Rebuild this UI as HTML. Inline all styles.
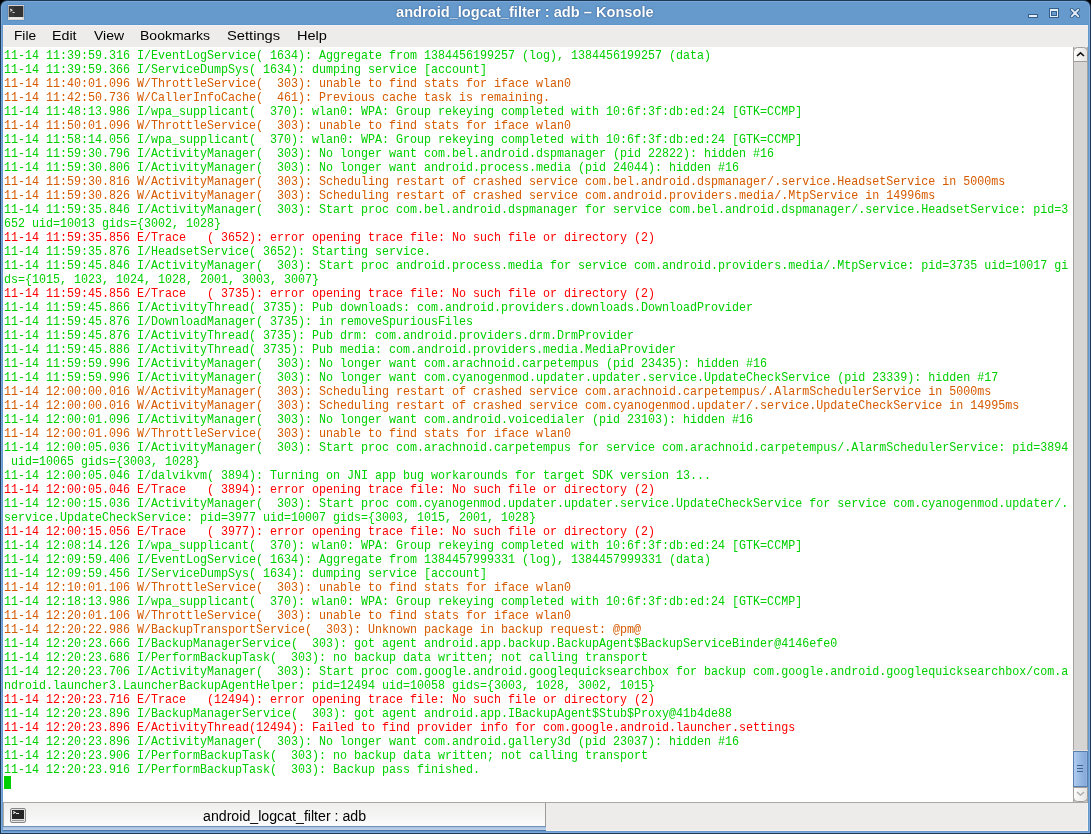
<!DOCTYPE html>
<html><head><meta charset="utf-8">
<style>
*{margin:0;padding:0;box-sizing:border-box}
html,body{width:1091px;height:834px;overflow:hidden;background:#000;position:relative}
.abs{position:absolute}
#f0{position:absolute;left:0;top:0;width:1091px;height:834px;background:#1f3a55;border-radius:7px 7px 0 0}
#f1{position:absolute;left:1px;top:1px;width:1089px;height:832px;background:#7aa8dc;border-radius:6px 6px 0 0}
#f2{position:absolute;left:2px;top:2px;width:1087px;height:830px;background:#6699cc;border-radius:5px 5px 0 0}
.lbl{position:absolute;line-height:20px;white-space:pre;transform-origin:0 0;font-family:"Liberation Sans",sans-serif;will-change:transform}
#ttl{left:396px;top:2px;font-size:14px;font-weight:bold;color:#fff;transform:scaleX(1.0447);will-change:transform;text-shadow:0 0 1px #2f5a8c,0 0 2px #3d6899}
#tline{position:absolute;left:2px;top:24px;width:1086px;height:1px;background:#5b96d0}
#menubar{position:absolute;left:3px;top:25px;width:1085px;height:22px;background:#edeceb;border-top:1px solid #f6f2ee}
.mi{top:26px;font-size:13px;color:#000}
#term{position:absolute;left:3px;top:47px;width:1070px;height:755px;background:#fff;overflow:hidden}
#txt{position:absolute;left:1px;top:0px;width:1070px;height:755px;will-change:transform}
#txt div{position:absolute;left:0;font-family:"Liberation Mono",monospace;font-size:13px;line-height:14px;white-space:pre;transform:scaleX(0.897436);transform-origin:0 0}
.g{color:#00d000}.o{color:#d65a00}.r{color:#ff0000}
#cursor{position:absolute;left:1px;top:729px;width:7px;height:13px;background:#00d000}
#sb{position:absolute;left:1073px;top:47px;width:15px;height:755px;background:#d6d5d3;border-left:1px solid #a5a29f;border-right:1px solid #a5a29f}
#bottomline{position:absolute;left:3px;top:802px;width:1085px;height:1px;background:#a9a8a6}
#tabbar{position:absolute;left:3px;top:803px;width:1084px;height:27px;background:#edeceb}
#tabhl{position:absolute;left:546px;top:830px;width:542px;height:1px;background:#f6f2ee}
#tabhl2{position:absolute;left:1087px;top:803px;width:1px;height:28px;background:#f6f2ee}
#tab{position:absolute;left:0px;top:0px;width:543px;height:23px;background:linear-gradient(#efeeed,#fbfbfb);border-left:1px solid #b3aca6;border-right:1px solid #9b9b9b}
#tabstrip{position:absolute;left:0;top:23px;width:543px;height:5px;background:linear-gradient(#7391b8 0px,#7391b8 1px,#a4bfe0 1px,#c1d3ea 4px,#4a73a6 4px)}
#tabt{left:203px;top:806px;font-size:14px;color:#000;transform:scaleX(1.0125)}
</style></head><body>
<div id="f0"></div><div id="f1"></div><div id="f2"></div>
<div id="tline"></div>
<div id="title">
<svg class="abs" style="left:7px;top:4px" width="18" height="17" viewBox="0 0 18 17">
<rect x="0" y="0" width="18" height="17" rx="2" fill="#4f80b8" opacity="0.45"/>
<rect x="1" y="1" width="16" height="15" fill="#a8a8a8"/>
<rect x="1" y="1" width="16" height="1" fill="#d4d4d4"/>
<rect x="2" y="2" width="14" height="11" fill="#323232"/>
<rect x="2" y="2" width="5" height="11" fill="#3a3a3a"/>
<rect x="1" y="13" width="16" height="3" fill="#d6d6d6"/>
<rect x="3" y="13.5" width="12" height="1.5" fill="#ececec"/>
<path d="M3.2 5 L5 6.2 L3.2 7.4" stroke="#e0e0e0" fill="none" stroke-width="1.1"/>
<rect x="5.5" y="8" width="2.2" height="1" fill="#d0d0d0"/>
</svg>
<div id="ttl" class="lbl">android_logcat_filter : adb – Konsole</div>
<svg class="abs" style="left:1028px;top:8px" width="52" height="10" viewBox="0 0 52 10">
<rect x="0.5" y="6.5" width="9" height="3" fill="#e6eef8" stroke="#335e8c"/>
<rect x="21.5" y="0.5" width="9" height="9" fill="#e6eef8" stroke="#335e8c"/>
<rect x="23.5" y="3.5" width="5" height="4" fill="#6699cc" stroke="#335e8c"/>
<path d="M43.7 1.7 L50.3 8.3 M50.3 1.7 L43.7 8.3" stroke="#335e8c" stroke-width="3.6" stroke-linecap="round"/>
<path d="M43.7 1.7 L50.3 8.3 M50.3 1.7 L43.7 8.3" stroke="#e6eef8" stroke-width="1.8" stroke-linecap="round"/>
</svg>
</div>
<div id="menubar"></div>
<div class="lbl mi" style="left:13.95px;transform:scaleX(1.0526)">File</div><div class="lbl mi" style="left:51.9px;transform:scaleX(1.0952)">Edit</div><div class="lbl mi" style="left:94px;transform:scaleX(1.0714)">View</div><div class="lbl mi" style="left:139.92px;transform:scaleX(1.0781)">Bookmarks</div><div class="lbl mi" style="left:226.87px;transform:scaleX(1.1304)">Settings</div><div class="lbl mi" style="left:296.88px;transform:scaleX(1.12)">Help</div>
<div id="term"><div id="txt"><div class="g" style="top:2px">11-14 11:39:59.316 I/EventLogService( 1634): Aggregate from 1384456199257 (log), 1384456199257 (data)</div><div class="g" style="top:16px">11-14 11:39:59.366 I/ServiceDumpSys( 1634): dumping service [account]</div><div class="o" style="top:30px">11-14 11:40:01.096 W/ThrottleService(  303): unable to find stats for iface wlan0</div><div class="o" style="top:44px">11-14 11:42:50.736 W/CallerInfoCache(  461): Previous cache task is remaining.</div><div class="g" style="top:58px">11-14 11:48:13.986 I/wpa_supplicant(  370): wlan0: WPA: Group rekeying completed with 10:6f:3f:db:ed:24 [GTK=CCMP]</div><div class="o" style="top:72px">11-14 11:50:01.096 W/ThrottleService(  303): unable to find stats for iface wlan0</div><div class="g" style="top:86px">11-14 11:58:14.056 I/wpa_supplicant(  370): wlan0: WPA: Group rekeying completed with 10:6f:3f:db:ed:24 [GTK=CCMP]</div><div class="g" style="top:100px">11-14 11:59:30.796 I/ActivityManager(  303): No longer want com.bel.android.dspmanager (pid 22822): hidden #16</div><div class="g" style="top:114px">11-14 11:59:30.806 I/ActivityManager(  303): No longer want android.process.media (pid 24044): hidden #16</div><div class="o" style="top:128px">11-14 11:59:30.816 W/ActivityManager(  303): Scheduling restart of crashed service com.bel.android.dspmanager/.service.HeadsetService in 5000ms</div><div class="o" style="top:142px">11-14 11:59:30.826 W/ActivityManager(  303): Scheduling restart of crashed service com.android.providers.media/.MtpService in 14996ms</div><div class="g" style="top:156px">11-14 11:59:35.846 I/ActivityManager(  303): Start proc com.bel.android.dspmanager for service com.bel.android.dspmanager/.service.HeadsetService: pid=3</div><div class="g" style="top:170px">652 uid=10013 gids={3002, 1028}</div><div class="r" style="top:184px">11-14 11:59:35.856 E/Trace   ( 3652): error opening trace file: No such file or directory (2)</div><div class="g" style="top:198px">11-14 11:59:35.876 I/HeadsetService( 3652): Starting service.</div><div class="g" style="top:212px">11-14 11:59:45.846 I/ActivityManager(  303): Start proc android.process.media for service com.android.providers.media/.MtpService: pid=3735 uid=10017 gi</div><div class="g" style="top:226px">ds={1015, 1023, 1024, 1028, 2001, 3003, 3007}</div><div class="r" style="top:240px">11-14 11:59:45.856 E/Trace   ( 3735): error opening trace file: No such file or directory (2)</div><div class="g" style="top:254px">11-14 11:59:45.866 I/ActivityThread( 3735): Pub downloads: com.android.providers.downloads.DownloadProvider</div><div class="g" style="top:268px">11-14 11:59:45.876 I/DownloadManager( 3735): in removeSpuriousFiles</div><div class="g" style="top:282px">11-14 11:59:45.876 I/ActivityThread( 3735): Pub drm: com.android.providers.drm.DrmProvider</div><div class="g" style="top:296px">11-14 11:59:45.886 I/ActivityThread( 3735): Pub media: com.android.providers.media.MediaProvider</div><div class="g" style="top:310px">11-14 11:59:59.996 I/ActivityManager(  303): No longer want com.arachnoid.carpetempus (pid 23435): hidden #16</div><div class="g" style="top:324px">11-14 11:59:59.996 I/ActivityManager(  303): No longer want com.cyanogenmod.updater.updater.service.UpdateCheckService (pid 23339): hidden #17</div><div class="o" style="top:338px">11-14 12:00:00.016 W/ActivityManager(  303): Scheduling restart of crashed service com.arachnoid.carpetempus/.AlarmSchedulerService in 5000ms</div><div class="o" style="top:352px">11-14 12:00:00.016 W/ActivityManager(  303): Scheduling restart of crashed service com.cyanogenmod.updater/.service.UpdateCheckService in 14995ms</div><div class="g" style="top:366px">11-14 12:00:01.096 I/ActivityManager(  303): No longer want com.android.voicedialer (pid 23103): hidden #16</div><div class="o" style="top:380px">11-14 12:00:01.096 W/ThrottleService(  303): unable to find stats for iface wlan0</div><div class="g" style="top:394px">11-14 12:00:05.036 I/ActivityManager(  303): Start proc com.arachnoid.carpetempus for service com.arachnoid.carpetempus/.AlarmSchedulerService: pid=3894</div><div class="g" style="top:408px"> uid=10065 gids={3003, 1028}</div><div class="g" style="top:422px">11-14 12:00:05.046 I/dalvikvm( 3894): Turning on JNI app bug workarounds for target SDK version 13...</div><div class="r" style="top:436px">11-14 12:00:05.046 E/Trace   ( 3894): error opening trace file: No such file or directory (2)</div><div class="g" style="top:450px">11-14 12:00:15.036 I/ActivityManager(  303): Start proc com.cyanogenmod.updater.updater.service.UpdateCheckService for service com.cyanogenmod.updater/.</div><div class="g" style="top:464px">service.UpdateCheckService: pid=3977 uid=10007 gids={3003, 1015, 2001, 1028}</div><div class="r" style="top:478px">11-14 12:00:15.056 E/Trace   ( 3977): error opening trace file: No such file or directory (2)</div><div class="g" style="top:492px">11-14 12:08:14.126 I/wpa_supplicant(  370): wlan0: WPA: Group rekeying completed with 10:6f:3f:db:ed:24 [GTK=CCMP]</div><div class="g" style="top:506px">11-14 12:09:59.406 I/EventLogService( 1634): Aggregate from 1384457999331 (log), 1384457999331 (data)</div><div class="g" style="top:520px">11-14 12:09:59.456 I/ServiceDumpSys( 1634): dumping service [account]</div><div class="o" style="top:534px">11-14 12:10:01.106 W/ThrottleService(  303): unable to find stats for iface wlan0</div><div class="g" style="top:548px">11-14 12:18:13.986 I/wpa_supplicant(  370): wlan0: WPA: Group rekeying completed with 10:6f:3f:db:ed:24 [GTK=CCMP]</div><div class="o" style="top:562px">11-14 12:20:01.106 W/ThrottleService(  303): unable to find stats for iface wlan0</div><div class="o" style="top:576px">11-14 12:20:22.986 W/BackupTransportService(  303): Unknown package in backup request: @pm@</div><div class="g" style="top:590px">11-14 12:20:23.666 I/BackupManagerService(  303): got agent android.app.backup.BackupAgent$BackupServiceBinder@4146efe0</div><div class="g" style="top:604px">11-14 12:20:23.686 I/PerformBackupTask(  303): no backup data written; not calling transport</div><div class="g" style="top:618px">11-14 12:20:23.706 I/ActivityManager(  303): Start proc com.google.android.googlequicksearchbox for backup com.google.android.googlequicksearchbox/com.a</div><div class="g" style="top:632px">ndroid.launcher3.LauncherBackupAgentHelper: pid=12494 uid=10058 gids={3003, 1028, 3002, 1015}</div><div class="r" style="top:646px">11-14 12:20:23.716 E/Trace   (12494): error opening trace file: No such file or directory (2)</div><div class="g" style="top:660px">11-14 12:20:23.896 I/BackupManagerService(  303): got agent android.app.IBackupAgent$Stub$Proxy@41b4de88</div><div class="r" style="top:674px">11-14 12:20:23.896 E/ActivityThread(12494): Failed to find provider info for com.google.android.launcher.settings</div><div class="g" style="top:688px">11-14 12:20:23.896 I/ActivityManager(  303): No longer want com.android.gallery3d (pid 23037): hidden #16</div><div class="g" style="top:702px">11-14 12:20:23.906 I/PerformBackupTask(  303): no backup data written; not calling transport</div><div class="g" style="top:716px">11-14 12:20:23.916 I/PerformBackupTask(  303): Backup pass finished.</div></div><div id="cursor"></div></div>
<div id="sb"></div>
<svg class="abs" style="left:1073px;top:47px" width="15" height="755" viewBox="0 0 15 755">
<defs>
<linearGradient id="btn" x1="0" y1="0" x2="1" y2="0"><stop offset="0" stop-color="#fdfdfd"/><stop offset="1" stop-color="#e4e3e2"/></linearGradient>
<linearGradient id="sl" x1="0" y1="0" x2="1" y2="0"><stop offset="0" stop-color="#b2cdf0"/><stop offset="0.45" stop-color="#98b9e3"/><stop offset="0.85" stop-color="#86aadb"/><stop offset="1" stop-color="#9ab8e2"/></linearGradient>
</defs>
<path d="M0.5 14.5 V4.5 Q0.5 0.5 4.5 0.5 H10.5 Q14.5 0.5 14.5 4.5 V14.5 Z" fill="url(#btn)" stroke="#a09d9a"/>
<path d="M4 9 L7.5 5.8 L11 9" stroke="#111" stroke-width="1.6" fill="none"/>
<rect x="0" y="703" width="15" height="1" fill="#e4e0dc"/><rect x="0.5" y="704.5" width="14" height="35" fill="url(#sl)" stroke="#5a7eae"/>
<rect x="4" y="718" width="6" height="1" fill="#3f6391"/>
<rect x="4" y="721" width="6" height="1" fill="#3f6391"/>
<rect x="4" y="724" width="6" height="1" fill="#3f6391"/>
<path d="M0.5 740.5 V750.5 Q0.5 754.5 4.5 754.5 H10.5 Q14.5 754.5 14.5 750.5 V740.5 Z" fill="url(#btn)" stroke="#a09d9a"/>
<path d="M4 745 L7.5 748.2 L11 745" stroke="#aaa" stroke-width="1.3" fill="none"/>
</svg>
<div id="bottomline"></div>
<div id="tabbar"><div id="tab">
<svg class="abs" style="left:6px;top:5px" width="16" height="15" viewBox="0 0 16 15">
<rect x="0.5" y="0.5" width="15" height="14" rx="1.5" fill="#e4e4e4" stroke="#858585"/>
<rect x="2" y="2" width="12" height="9" fill="#262626"/>
<rect x="2" y="12" width="12" height="1" fill="#9a9a9a"/>
<path d="M3.2 3.4 L5.2 4.5 L3.2 5.6" stroke="#eee" fill="none" stroke-width="1.1"/>
<rect x="6" y="5" width="3" height="1" fill="#e8e8e8"/>
</svg>
</div><div id="tabstrip"></div></div><div id="tabt" class="lbl">android_logcat_filter : adb</div>
<div id="tabhl"></div><div id="tabhl2"></div>
</body></html>
